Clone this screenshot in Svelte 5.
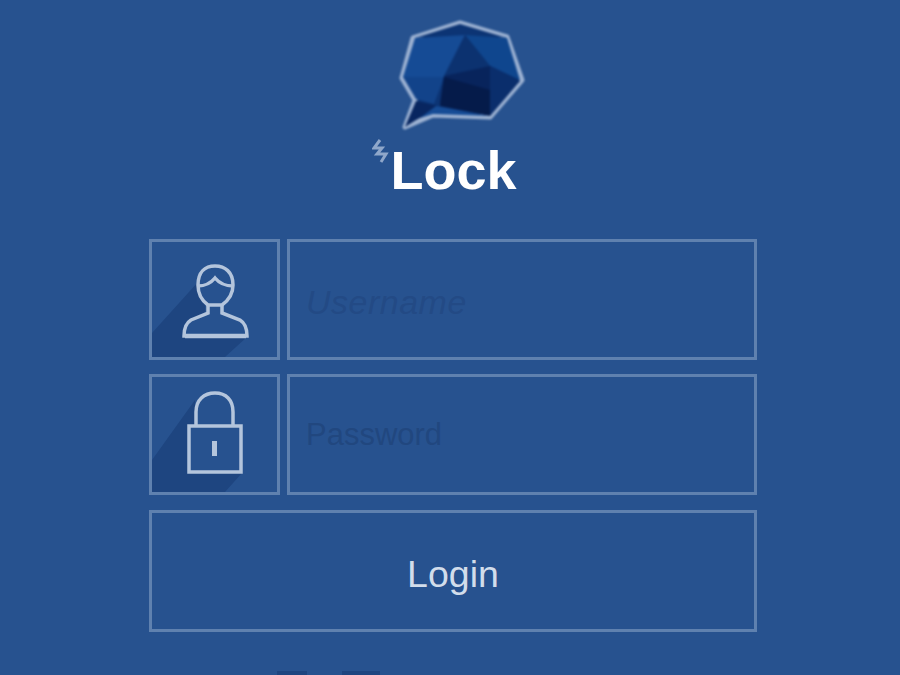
<script>
	let username = $state('');
	let password = $state('');
</script>

<div class="page">
	<header class="brand">
		<svg class="logo" viewBox="370 15 160 120" aria-hidden="true">
			<polygon class="edge" points="460,23 507,37 522,80 490,117 433,115 405,127 415,100 402,78 413,38" />
			<polygon fill="#0c3474" points="460,24 415,38 465,35 507,38" />
			<polygon fill="#154b95" points="415,38 465,35 444,77 403,77" />
			<polygon fill="#12438a" points="403,77 444,77 434,104 416,99" />
			<polygon fill="#0f468e" points="465,35 507,38 520,80 490,66" />
			<polygon fill="#0c3270" points="465,35 490,66 444,76" />
			<polygon fill="#08245c" points="444,76 490,66 520,81 490,100 440,103" />
			<polygon fill="#0a2e6c" points="520,81 490,66 490,116" />
			<polygon fill="#051b4a" points="444,77 490,90 490,116 440,106" />
			<polygon fill="#082660" points="416,101 438,106 405,127" />
			<polygon fill="#164c96" points="436,106 490,116 433,114 420,118" />
		</svg>
		<div class="wordmark">
			<svg class="bolt" viewBox="0 0 18 24" aria-hidden="true">
				<path d="M8 1 L2 9 L10 9 L5 15 L14 15 L9 23" />
			</svg>
			<span>Lock</span>
		</div>
	</header>

	<form class="login" onsubmit={(e) => e.preventDefault()}>
		<div class="row">
			<div class="icon-box">
				<svg viewBox="152 242 125 115" aria-hidden="true">
					<polygon class="shadow" points="198,282 152,333 152,357 225,357 247,337 184,337 184,325 205,312 205,305 198,290" />
					<g class="line">
						<path d="M208 305 C201 300 198 294 198 285 C198 272 205 266 215 266 C225 266 233 272 233 285 C233 294 229 300 222 305 Z" />
						<path d="M198 286 C205 286 210 284 215 278 C220 284 226 286 233 286" />
						<path d="M208 305 L208 313 L191 320 C186 323 184 328 184 336 L247 336 C247 328 245 323 240 320 L222 313 L222 305" />
						<path class="thick" d="M185 336 L246 336" />
					</g>
				</svg>
			</div>
			<input class="field user" type="text" placeholder="Username" bind:value={username} />
		</div>
		<div class="row">
			<div class="icon-box">
				<svg viewBox="152 377 125 115" aria-hidden="true">
					<polygon class="shadow" points="195,400 152,460 152,492 225,492 242,473 188,473 188,425 195,425" />
					<g class="line">
						<path d="M196 425 L196 412 C196 400 204 393 215 393 C226 393 233 400 233 412 L233 425" />
						<rect x="189" y="426" width="52" height="46" />
						<rect class="key" x="212" y="441" width="5" height="15" />
					</g>
				</svg>
			</div>
			<input class="field pass" type="password" placeholder="Password" bind:value={password} />
		</div>
		<button class="submit" type="submit">Login</button>
	</form>

	<div class="stubs">
		<span class="stub one"></span>
		<span class="stub two"></span>
	</div>
</div>

<style>
	:global(body) {
		background: #27528f;
	}

	.page {
		width: 900px;
		height: 675px;
		overflow: hidden;
		background: #27528f;
		padding-top: 15px;
		box-sizing: border-box;
		font-family: "Liberation Sans", Arial, sans-serif;
	}

	.brand {
		display: flex;
		flex-direction: column;
		align-items: center;
		height: 224px;
	}

	.logo {
		display: block;
		width: 160px;
		height: 120px;
		filter: blur(0.8px);
	}

	.edge {
		fill: #0c3474;
		stroke: #9db2d2;
		stroke-width: 5;
		stroke-linejoin: round;
	}

	.wordmark {
		display: flex;
		align-items: flex-start;
		margin-right: 11px;
		height: 60px;
		color: #fff;
		font-size: 54px;
		font-weight: 700;
		line-height: 60px;
		filter: blur(0.6px);
	}

	.wordmark span {
		margin-top: 5px;
	}

	.bolt {
		width: 18px;
		height: 24px;
		margin: 4px 0 0 0;
		fill: none;
		stroke: #8fa7ca;
		stroke-width: 3;
	}

	.login {
		display: flex;
		flex-direction: column;
		gap: 14px;
		width: 608px;
		margin-left: 149px;
	}

	.row {
		display: flex;
		gap: 7px;
		height: 121px;
	}

	.icon-box {
		flex: 0 0 131px;
		box-sizing: border-box;
		border: 3px solid #5f81af;
	}

	.icon-box svg {
		display: block;
		width: 100%;
		height: 100%;
	}

	.shadow {
		fill: #1e4580;
	}

	.line {
		fill: none;
		stroke: #b4c5dc;
		stroke-width: 3.5;
		filter: blur(0.4px);
	}

	.thick {
		stroke-width: 4.5;
	}

	.key {
		fill: #b4c5dc;
		stroke: none;
	}

	.field {
		flex: 1;
		min-width: 0;
		box-sizing: border-box;
		padding: 0 16px;
		background: transparent;
		border: 3px solid #5f81af;
		border-radius: 0;
		outline: none;
		color: #fff;
		font-family: inherit;
	}

	.field::placeholder {
		opacity: 1;
		color: #234a85;
	}

	.user {
		padding-top: 6px;
		font-size: 34px;
		font-style: italic;
		letter-spacing: 0.5px;
	}

	.pass {
		font-size: 31px;
	}

	.pass::placeholder {
		color: #21477f;
	}

	.submit {
		height: 122px;
		margin-top: 1px;
		padding: 7px 0 0;
		background: transparent;
		border: 3px solid #5f81af;
		color: #d2ddeb;
		font-family: inherit;
		font-size: 37.5px;
	}

	.stubs {
		display: flex;
		gap: 35px;
		margin: 39px 0 0 277px;
	}

	.stub {
		height: 8px;
		background: #1e4580;
	}

	.one {
		width: 30px;
	}

	.two {
		width: 38px;
	}
</style>
